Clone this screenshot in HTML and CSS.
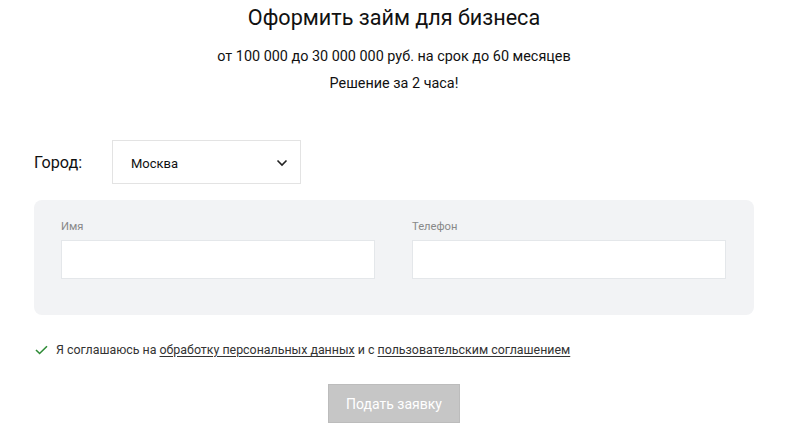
FILE: index.html
```html
<!DOCTYPE html>
<html lang="ru">
<head>
<meta charset="utf-8">
<title>Оформить займ для бизнеса</title>
<link rel="stylesheet" href="styles.css">
</head>
<body>
<div class="page">
  <h1 class="title">Оформить займ для бизнеса</h1>
  <p class="sub">от 100 000 до 30 000 000 руб. на срок до 60 месяцев</p>
  <p class="sub">Решение за 2 часа!</p>

  <div class="city-row">
    <span class="city-label">Город:</span>
    <div class="select">
      <span>Москва</span>
      <svg class="chev" width="12" height="8" viewBox="0 0 12 8"><path d="M1.5 1.5 L6 6 L10.5 1.5" fill="none" stroke="#222" stroke-width="1.6"/></svg>
    </div>
  </div>

  <div class="panel">
    <div class="field">
      <label class="field-label">Имя</label>
      <div class="input"></div>
    </div>
    <div class="field">
      <label class="field-label">Телефон</label>
      <div class="input"></div>
    </div>
  </div>

  <div class="agree">
    <svg class="check" width="13" height="10" viewBox="0 0 13 10"><path d="M1 5 L4.6 8.5 L12 1.2" fill="none" stroke="#2e8b36" stroke-width="1.6"/></svg>
    <span>Я соглашаюсь на <a href="#">обработку персональных данных</a> и с <a href="#">пользовательским соглашением</a></span>
  </div>

  <div class="btn-row">
    <button class="btn">Подать заявку</button>
  </div>
</div>
</body>
</html>
```

FILE: styles.css
```css
* { box-sizing: border-box; }
html, body { margin: 0; padding: 0; background: #fff; }
body { font-family: Roboto, "Liberation Sans", Arial, sans-serif; color: #1a1a1a; }
.page { padding: 5px 34px 0 34px; }
.title { margin: 0; font-size: 21.6px; line-height: 26px; font-weight: 400; text-align: center; color: #111; }
.sub { margin: 0; font-size: 14.4px; line-height: 27px; text-align: center; color: #111; }
.title + .sub { margin-top: 12px; }
.city-row { display: flex; align-items: center; margin-top: 43px; }
.city-label { width: 78px; font-size: 16.2px; color: #111; }
.select { width: 189px; height: 44px; border: 1px solid #e3e3e3; display: flex; align-items: center; justify-content: space-between; padding: 2px 12px 0 18px; font-size: 13px; color: #111; }
.chev { display: block; }
.panel { margin-top: 16px; background: #f2f3f5; border-radius: 8px; padding: 19px 28px 36px 27px; display: grid; grid-template-columns: 1fr 1fr; column-gap: 37px; }
.field-label { display: block; font-size: 11.2px; line-height: 16px; color: #888; margin-bottom: 5px; }
.input { height: 39px; background: #fff; border: 1px solid #e4e7ea; }
.agree { margin-top: 25px; display: flex; align-items: center; font-size: 12.4px; line-height: 20px; color: #333; padding-left: 1px; }
.check { display: block; margin-right: 8px; }
.agree a { color: #333; text-decoration: underline; text-underline-offset: 2px; }
.btn-row { display: flex; justify-content: center; margin-top: 24px; }
.btn { width: 132px; height: 39px; background: #c6c6c6; border: 1px solid #bcbcbc; color: #fff; font-family: Roboto, "Liberation Sans", Arial, sans-serif; font-size: 14px; padding: 0; }
```
